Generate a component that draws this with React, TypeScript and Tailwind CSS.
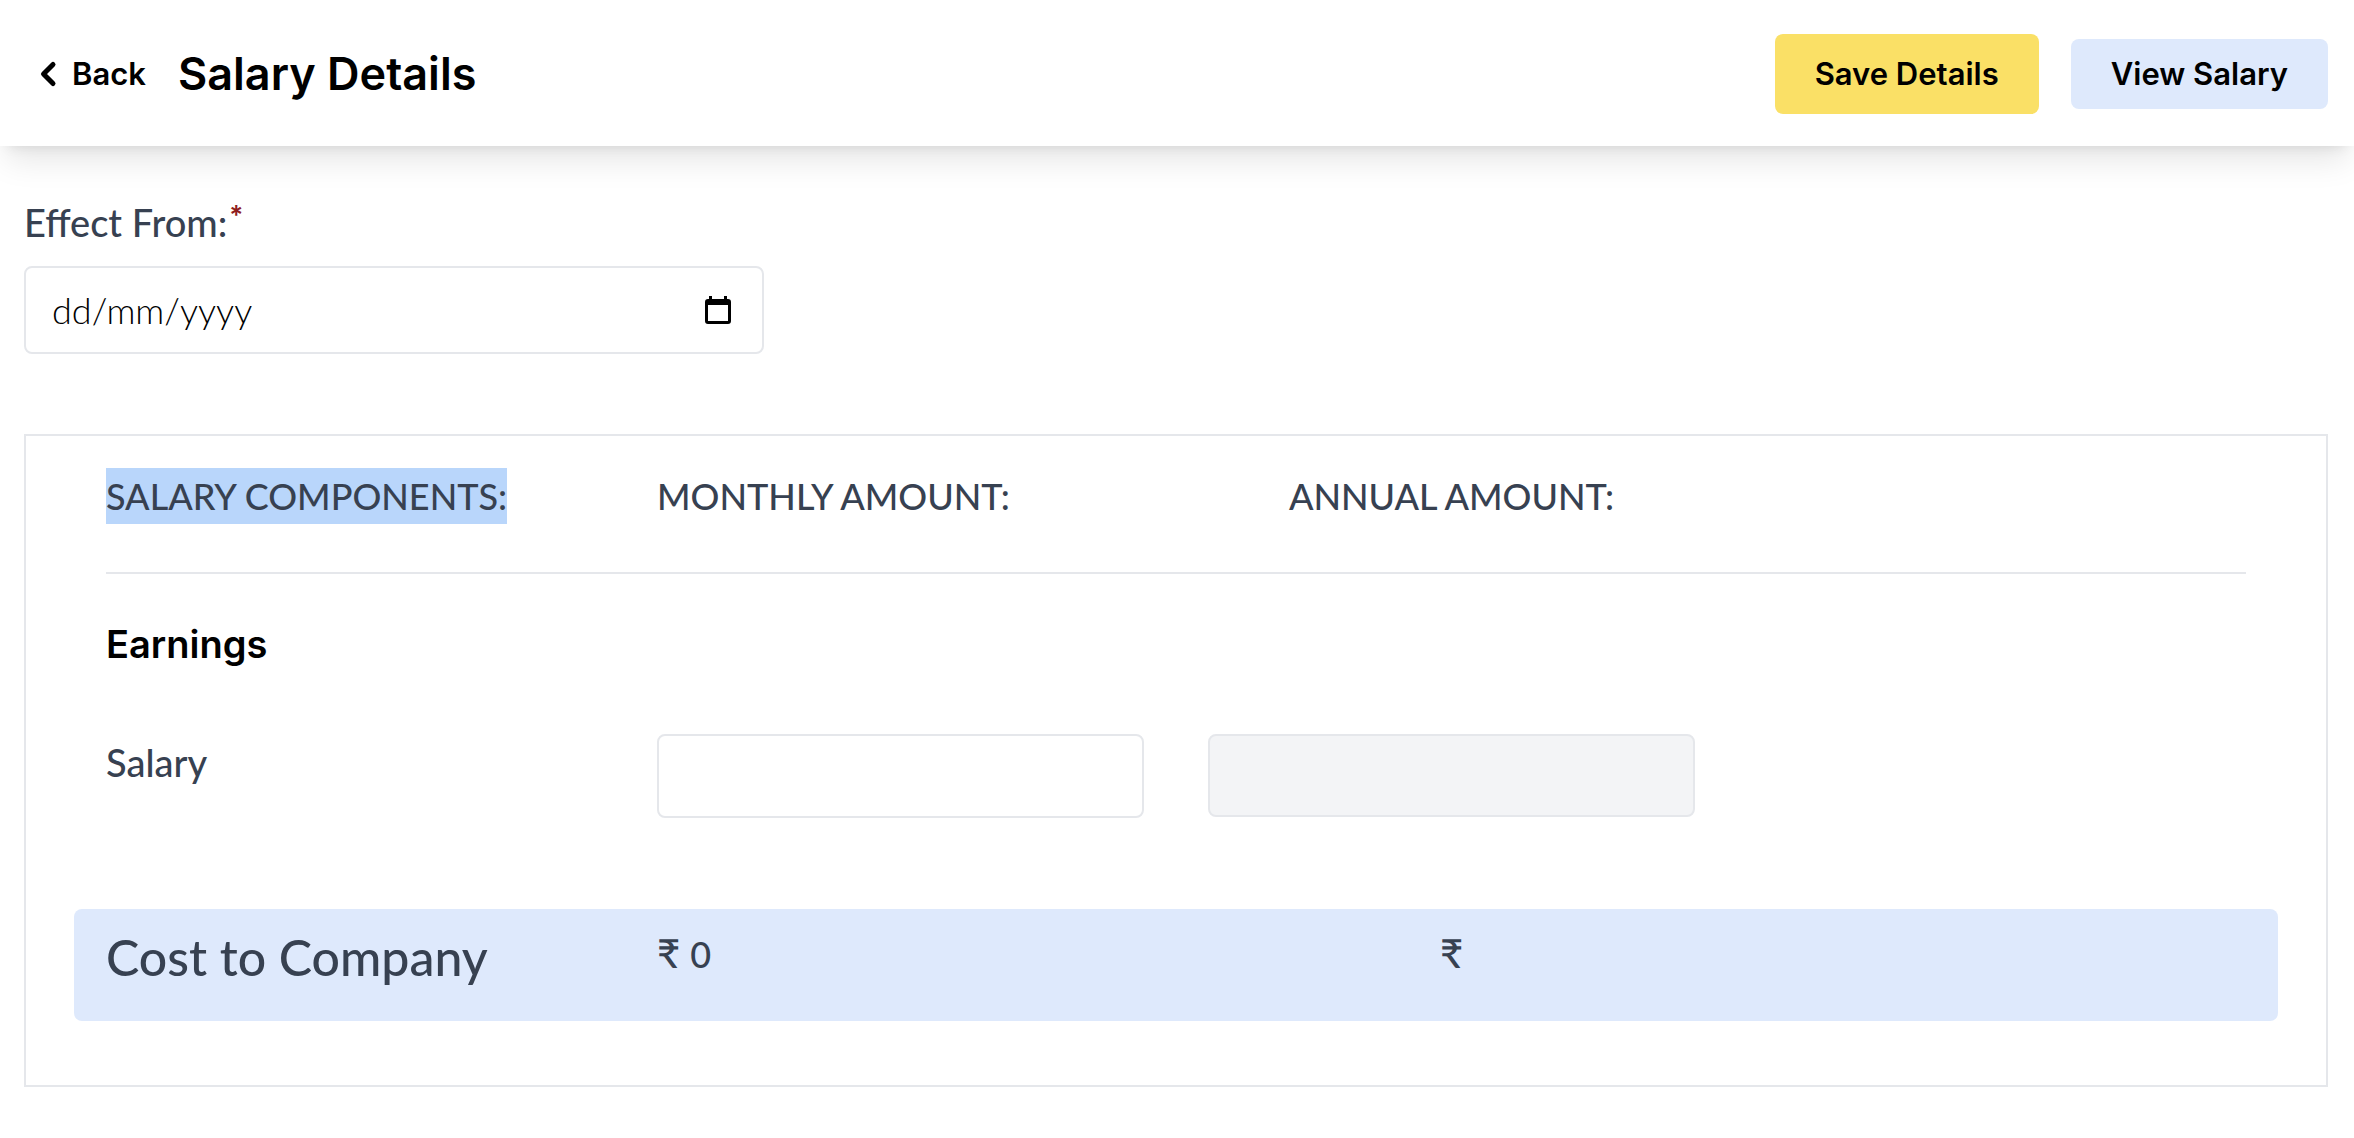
import React, { useState } from "react";

const caption = "text-[36px] leading-[56px] font-medium text-[#374151]";
const label = "text-[38px] leading-[56px] font-medium text-[#374151]";

export default function App() {
  const [date, setDate] = useState("");
  const [monthly, setMonthly] = useState("");
  const annual = monthly ? String(Number(monthly) * 12) : "";

  return (
    <div className="min-h-screen bg-white font-['Lato',sans-serif] text-black">
      <header className="flex items-center justify-between px-6 pt-[34px] pb-8 font-['Inter',sans-serif] shadow-[0_20px_30px_-6px_rgb(0_0_0/0.1),0_8px_12px_-8px_rgb(0_0_0/0.1)]">
        <div className="flex items-center gap-8">
          <button type="button" className="flex items-center text-[31px] leading-[48px] font-semibold">
            <svg viewBox="0 0 48 48" className="size-12" fill="none" aria-hidden="true">
              <path d="M29 14.5 19.5 24l9.5 9.5" stroke="currentColor" strokeWidth="5" strokeLinecap="round" strokeLinejoin="round" />
            </svg>
            Back
          </button>
          <h1 className="text-[45px] leading-[56px] font-semibold">Salary Details</h1>
        </div>
        <div className="flex items-center gap-8 pr-[2px]">
          <button type="button" className="h-20 rounded-lg bg-[#fae066] px-10 text-[31px] leading-[48px] font-semibold">
            Save Details
          </button>
          <button type="button" className="h-[70px] rounded-lg bg-[#dee9fc] px-10 text-[31px] leading-[48px] font-semibold">
            View Salary
          </button>
        </div>
      </header>

      <main className="px-6 pt-12 pr-[26px]">
        <div className="flex w-[740px] max-w-full flex-col gap-4">
          <label htmlFor="effect-from" className={label}>
            Effect From:
            <sup className="ml-[2px] font-['Inter',sans-serif] text-[26px] font-semibold text-[#8f1d1d]">*</sup>
          </label>
          <div className="flex h-[88px] items-center rounded-lg border-2 border-gray-200 pr-6 pl-[26px]">
            <input
              id="effect-from"
              type="text"
              placeholder="dd/mm/yyyy"
              value={date}
              onChange={(e) => setDate(e.target.value)}
              className="min-w-0 flex-1 bg-transparent text-[36px] leading-[48px] font-light outline-none placeholder:text-black"
            />
            <button type="button" aria-label="Open calendar" className="flex size-10 items-center justify-center">
              <svg viewBox="0 0 26 28" className="h-7 w-[26px]" aria-hidden="true">
                <path d="M4 0h3v3h12V0h3v3h1a3 3 0 0 1 3 3v19a3 3 0 0 1-3 3H3a3 3 0 0 1-3-3V6a3 3 0 0 1 3-3h1zM3 9v16h20V9z" fill="currentColor" fillRule="evenodd" />
              </svg>
            </button>
          </div>
        </div>

        <section className="mt-20 border-2 border-gray-200 px-12 pt-8 pb-16">
          <div className="px-8">
            <div className="grid grid-cols-4 gap-16 border-b-2 border-gray-200 pb-12">
              <h2 className={caption}>
                <span className="inline-block bg-[#b9d6fb]">SALARY COMPONENTS:</span>
              </h2>
              <h2 className={caption}>MONTHLY AMOUNT:</h2>
              <h2 className={`text-center ${caption}`}>ANNUAL AMOUNT:</h2>
            </div>
            <h3 className="mt-10 font-['Inter',sans-serif] text-[38px] leading-[60px] font-semibold">Earnings</h3>
            <div className="mt-[60px] grid grid-cols-4 items-start gap-16">
              <label htmlFor="monthly-salary" className={label}>
                Salary
              </label>
              <input
                id="monthly-salary"
                type="text"
                inputMode="numeric"
                value={monthly}
                onChange={(e) => setMonthly(e.target.value.replace(/\D/g, ""))}
                className="h-[84px] w-full rounded-lg border-2 border-gray-200 px-6 text-[36px] outline-none"
              />
              <input
                type="text"
                readOnly
                aria-label="Annual salary"
                value={annual}
                className="h-[83px] w-full rounded-lg border-2 border-gray-200 bg-gray-100 px-6 text-[36px] outline-none"
              />
            </div>
          </div>
          <div className="mt-[91px] grid h-28 grid-cols-4 gap-16 rounded-lg bg-[#dee9fc] px-8 pt-4 font-medium text-[#374151]">
            <p className="text-[50px] leading-[64px]">Cost to Company</p>
            <p className="text-[40px] leading-[56px]">
              ₹ <span className="text-[36px]">{monthly || "0"}</span>
            </p>
            <p className="text-center text-[40px] leading-[56px]">₹ {annual}</p>
          </div>
        </section>
      </main>
    </div>
  );
}
